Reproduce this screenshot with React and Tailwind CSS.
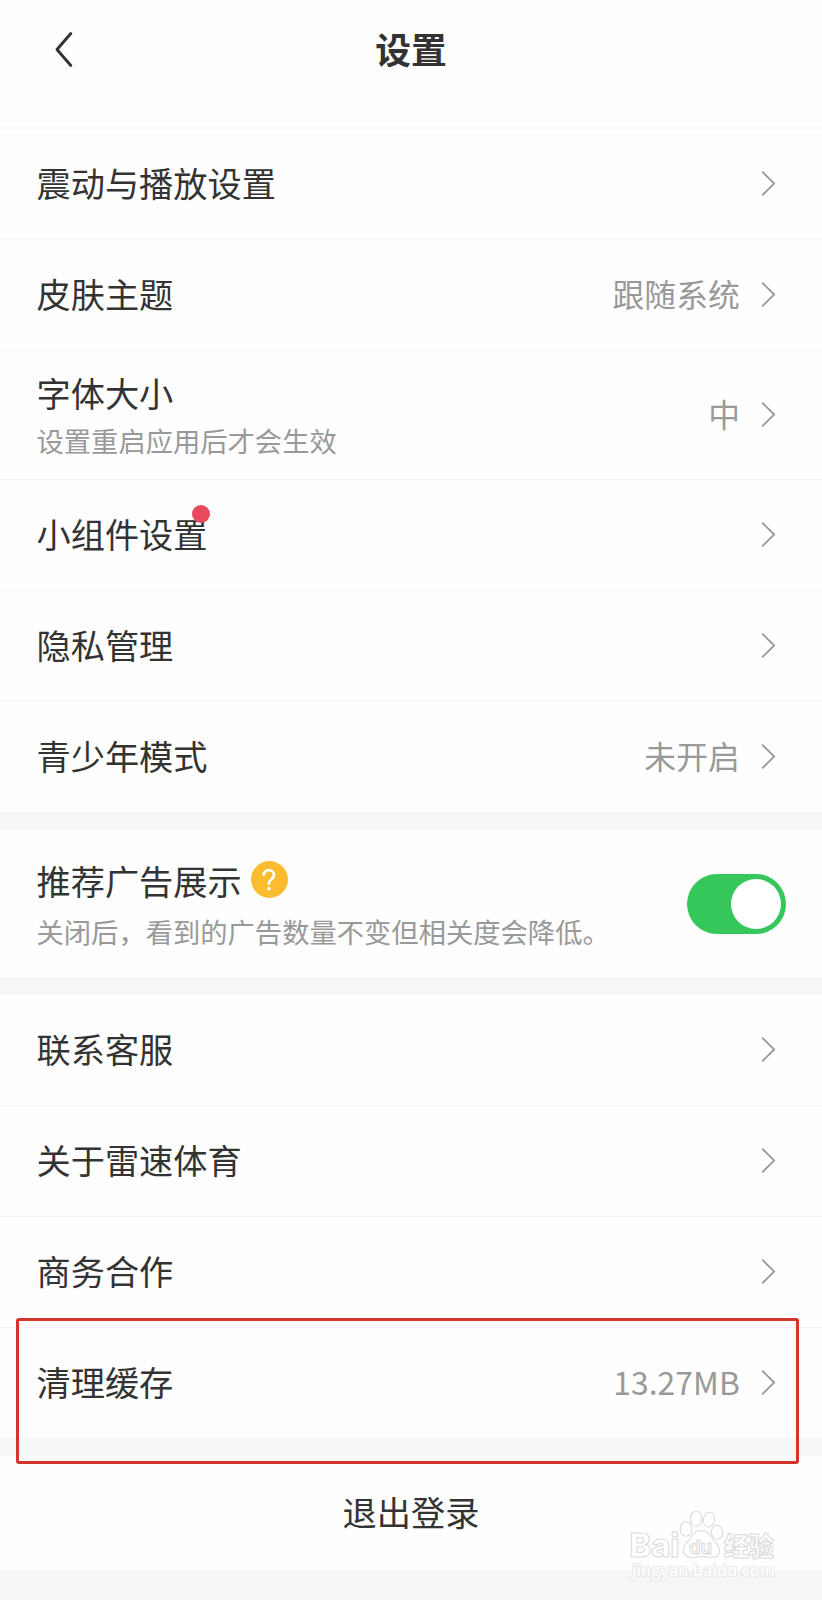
function Chevron() {
  return (
    <svg className="block h-[26px] w-[15px] shrink-0" viewBox="0 0 15 26" fill="none">
      <path d="M1.2 0.7 L13.2 12.5 L1.2 24.3" stroke="#999999" strokeWidth="1.8" />
    </svg>
  );
}

// One line of the settings list, 111px with its divider
function Row({ label, value, dot, line = "h-[111px] border-b-2 border-[#f8f8f9]" }) {
  return (
    <div className={`flex items-center justify-between pl-[36.5px] pr-[46px] ${line}`}>
      <div className="relative pb-[4px] text-[34.2px] leading-[44px] text-[#333333]">
        {label}
        {dot && <span className="absolute -right-[3px] -top-[6px] size-[18px] rounded-full bg-[#e84a5b]" />}
      </div>
      <div className="flex items-center gap-[21px]">
        {value && (
          <span className="pb-[4px] text-[31.8px] leading-[42px] tracking-[0.1px] text-[#999999]">{value}</span>
        )}
        <Chevron />
      </div>
    </div>
  );
}

function Gap() {
  return <div className="h-[18px] bg-[#f5f6f8]" />;
}

function Watermark() {
  return (
    <svg className="absolute left-[626px] top-[1506px]" width="156" height="80" viewBox="0 0 156 80">
      <g fill="#ffffff" stroke="#dcdcdc" strokeWidth="1.1">
        <text x="3.5" y="51" fontSize="33" fontWeight="800" fontFamily="Inter" textLength="50" lengthAdjust="spacingAndGlyphs">
          Bai
        </text>
        <ellipse cx="60" cy="23" rx="5.7" ry="7.2" />
        <ellipse cx="70.2" cy="12.8" rx="5.7" ry="7.6" />
        <ellipse cx="83" cy="13.6" rx="5.6" ry="7.4" transform="rotate(10 83 13.6)" />
        <ellipse cx="91" cy="26.3" rx="5.6" ry="7" transform="rotate(-5 91 26.3)" />
        <path d="M75 24.5 C66 24.5 65 33 60.5 37 C54 43 58 51.5 65 51.5 C70 51.5 71 50.5 75.5 50.5 C80 50.5 82 51.5 86 51.5 C94 51.5 96 43 90 37 C85 32 84 24.5 75 24.5 Z" />
        <text x="63" y="47.5" fontSize="19" fontWeight="600" fontFamily="Inter" textLength="23" lengthAdjust="spacingAndGlyphs">
          du
        </text>
        <text x="98" y="49.5" fontSize="26" fontWeight="900" fontFamily="Noto Sans CJK SC" textLength="50" lengthAdjust="spacingAndGlyphs">
          经验
        </text>
      </g>
      <text
        x="6"
        y="70"
        fontSize="17"
        fontWeight="600"
        fontFamily="Open Sans"
        fill="#ffffff"
        stroke="#e3e3e3"
        strokeWidth="1.5"
        paintOrder="stroke"
        textLength="143"
        lengthAdjust="spacingAndGlyphs"
      >
        jingyan.baidu.com
      </text>
    </svg>
  );
}

export default function App() {
  return (
    <div className="relative h-[1600px] w-[822px] overflow-hidden bg-[#f5f6f8] font-['Noto_Sans_CJK_SC',sans-serif]">
      {/* Header */}
      <header className="grid h-[129px] grid-cols-3 items-start border-b-2 border-[#f8f8f9] bg-[#fefefe]">
        <svg className="ml-[53px] mt-[30px] h-[40px] w-[22px]" viewBox="0 0 22 40" fill="none">
          <path d="M17.8 3.5 L4 19.5 L17.8 35.5" stroke="#333333" strokeWidth="2.9" strokeLinecap="round" strokeLinejoin="round" />
        </svg>
        <h1 className="mt-[24px] text-center text-[35.8px] font-bold leading-[48px] text-[#333333]">设置</h1>
      </header>

      <section className="bg-[#fefefe]">
        <Row label="震动与播放设置" />
        <Row label="皮肤主题" value="跟随系统" />
        <div className="flex h-[129px] items-center justify-between border-b border-[#f3f3f4] pl-[36.5px] pr-[46px]">
          <div className="pt-[2px]">
            <p className="text-[34.2px] leading-[48px] text-[#333333]">字体大小</p>
            <p className="text-[27.3px] leading-[49px] text-[#999999]">设置重启应用后才会生效</p>
          </div>
          <div className="flex items-center gap-[21px]">
            <span className="pb-[5px] text-[31.8px] leading-[42px] text-[#999999]">中</span>
            <Chevron />
          </div>
        </div>
        <Row label="小组件设置" dot />
        <Row label="隐私管理" />
        <Row label="青少年模式" value="未开启" line="h-[110px]" />
      </section>

      <Gap />

      {/* Ad preference */}
      <section className="flex h-[147px] items-center justify-between bg-[#fefefe] pl-[36.5px] pr-[36px]">
        <div className="pt-[5px]">
          <div className="flex items-center gap-[9px]">
            <span className="text-[34.2px] leading-[50px] text-[#333333]">推荐广告展示</span>
            <span className="flex size-[37px] items-center justify-center rounded-full bg-[#fcbc30]">
              <svg width="16" height="24" viewBox="0 0 16 24" fill="none">
                <path d="M2.8 7 C2.8 0.6 13 0.8 13 6.9 C13 11.2 7.9 10.8 7.9 15.8" stroke="#ffffff" strokeWidth="2.7" strokeLinecap="round" />
                <circle cx="7.9" cy="20.6" r="1.8" fill="#ffffff" />
              </svg>
            </span>
          </div>
          <p className="text-[27.3px] leading-[53px] text-[#999999]">关闭后，看到的广告数量不变但相关度会降低。</p>
        </div>
        <div className="flex h-[60px] w-[99px] items-center justify-end rounded-full bg-[#35c75a] pr-[5px]">
          <div className="size-[50px] rounded-full bg-white" />
        </div>
      </section>

      <Gap />

      <section className="bg-[#fefefe]">
        <Row label="联系客服" line="h-[111px] border-b border-[#f3f3f4]" />
        <Row label="关于雷速体育" line="h-[111px] border-b border-[#f3f3f4]" />
        <Row label="商务合作" line="h-[111px] border-b border-[#f3f3f4]" />
        <Row label="清理缓存" value="13.27MB" line="h-[110px]" />
      </section>

      <Gap />

      <button className="flex h-[114px] w-full items-center justify-center bg-[#fefefe] pb-[4px] text-[34.2px] leading-[44px] text-[#333333]">
        退出登录
      </button>

      {/* Highlight around the cache row */}
      <div className="absolute left-[16px] top-[1318px] h-[146px] w-[783px] rounded-[3px] border-3 border-[#d5342a]" />

      <Watermark />
    </div>
  );
}
